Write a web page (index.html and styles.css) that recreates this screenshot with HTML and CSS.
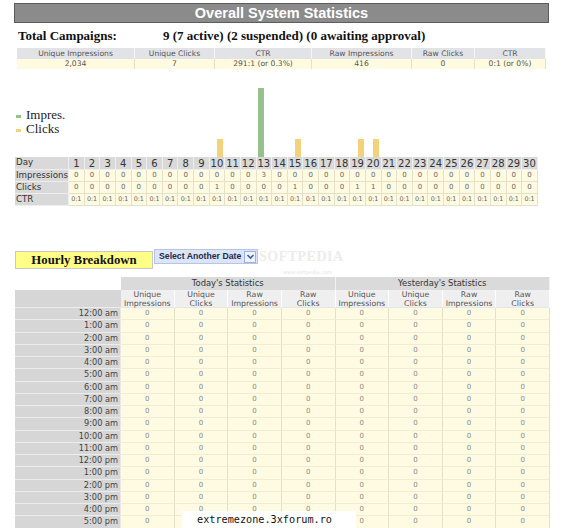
FILE: index.html
```html
<!DOCTYPE html>
<html>
<head>
<meta charset="utf-8">
<title>Overall System Statistics</title>
<link rel="stylesheet" href="styles.css">
</head>
<body>
<div class="page">
  <div class="title">Overall System Statistics</div>
  <div class="total"><span class="total-label">Total Campaigns:</span><span>9 (7 active) (2 suspended) (0 awaiting approval)</span></div>
  <div class="stats">
    <div class="sh">Unique Impressions</div><div class="sh">Unique Clicks</div><div class="sh">CTR</div><div class="sh">Raw Impressions</div><div class="sh">Raw Clicks</div><div class="sh">CTR</div>
    <div class="sd">2,034</div><div class="sd">7</div><div class="sd">291:1 (or 0.3%)</div><div class="sd">416</div><div class="sd">0</div><div class="sd">0:1 (or 0%)</div>
  </div>

  <div class="chart">
    <div class="legend"><div><span class="sw swi"></span>Impres.</div><div><span class="sw swc"></span>Clicks</div></div>
    <div class="day"></div><div class="day"></div><div class="day"></div><div class="day"></div><div class="day"></div>
    <div class="day"></div><div class="day"></div><div class="day"></div><div class="day"></div>
    <div class="day"><span class="bc" style="height:18px"></span></div>
    <div class="day"></div><div class="day"></div>
    <div class="day"><span class="bi" style="height:69px"></span></div>
    <div class="day"></div>
    <div class="day"><span class="bc" style="height:18px"></span></div>
    <div class="day"></div><div class="day"></div><div class="day"></div>
    <div class="day"><span class="bc" style="height:18px"></span></div>
    <div class="day"><span class="bc" style="height:18px"></span></div>
    <div class="day"></div><div class="day"></div><div class="day"></div><div class="day"></div><div class="day"></div>
    <div class="day"></div><div class="day"></div><div class="day"></div><div class="day"></div><div class="day"></div>
  </div>

  <div class="daily">
    <div class="lbl">Day</div>
    <div class="dh">1</div><div class="dh">2</div><div class="dh">3</div><div class="dh">4</div><div class="dh">5</div><div class="dh">6</div><div class="dh">7</div><div class="dh">8</div><div class="dh">9</div><div class="dh">10</div>
    <div class="dh">11</div><div class="dh">12</div><div class="dh">13</div><div class="dh">14</div><div class="dh">15</div><div class="dh">16</div><div class="dh">17</div><div class="dh">18</div><div class="dh">19</div><div class="dh">20</div>
    <div class="dh">21</div><div class="dh">22</div><div class="dh">23</div><div class="dh">24</div><div class="dh">25</div><div class="dh">26</div><div class="dh">27</div><div class="dh">28</div><div class="dh">29</div><div class="dh">30</div>

    <div class="lbl">Impressions</div>
    <div class="dd">0</div><div class="dd">0</div><div class="dd">0</div><div class="dd">0</div><div class="dd">0</div><div class="dd">0</div><div class="dd">0</div><div class="dd">0</div><div class="dd">0</div><div class="dd">0</div>
    <div class="dd">0</div><div class="dd">0</div><div class="dd">3</div><div class="dd">0</div><div class="dd">0</div><div class="dd">0</div><div class="dd">0</div><div class="dd">0</div><div class="dd">0</div><div class="dd">0</div>
    <div class="dd">0</div><div class="dd">0</div><div class="dd">0</div><div class="dd">0</div><div class="dd">0</div><div class="dd">0</div><div class="dd">0</div><div class="dd">0</div><div class="dd">0</div><div class="dd">0</div>

    <div class="lbl">Clicks</div>
    <div class="dd">0</div><div class="dd">0</div><div class="dd">0</div><div class="dd">0</div><div class="dd">0</div><div class="dd">0</div><div class="dd">0</div><div class="dd">0</div><div class="dd">0</div><div class="dd">1</div>
    <div class="dd">0</div><div class="dd">0</div><div class="dd">0</div><div class="dd">0</div><div class="dd">1</div><div class="dd">0</div><div class="dd">0</div><div class="dd">0</div><div class="dd">1</div><div class="dd">1</div>
    <div class="dd">0</div><div class="dd">0</div><div class="dd">0</div><div class="dd">0</div><div class="dd">0</div><div class="dd">0</div><div class="dd">0</div><div class="dd">0</div><div class="dd">0</div><div class="dd">0</div>

    <div class="lbl">CTR</div>
    <div class="dd ctr">0:1</div><div class="dd ctr">0:1</div><div class="dd ctr">0:1</div><div class="dd ctr">0:1</div><div class="dd ctr">0:1</div><div class="dd ctr">0:1</div><div class="dd ctr">0:1</div><div class="dd ctr">0:1</div><div class="dd ctr">0:1</div><div class="dd ctr">0:1</div>
    <div class="dd ctr">0:1</div><div class="dd ctr">0:1</div><div class="dd ctr">0:1</div><div class="dd ctr">0:1</div><div class="dd ctr">0:1</div><div class="dd ctr">0:1</div><div class="dd ctr">0:1</div><div class="dd ctr">0:1</div><div class="dd ctr">0:1</div><div class="dd ctr">0:1</div>
    <div class="dd ctr">0:1</div><div class="dd ctr">0:1</div><div class="dd ctr">0:1</div><div class="dd ctr">0:1</div><div class="dd ctr">0:1</div><div class="dd ctr">0:1</div><div class="dd ctr">0:1</div><div class="dd ctr">0:1</div><div class="dd ctr">0:1</div><div class="dd ctr">0:1</div>
  </div>

  <div class="controls">
    <div class="hb">Hourly Breakdown</div>
    <div class="sel"><span class="sel-text">Select Another Date</span><span class="sel-btn"><svg width="9" height="9" viewBox="0 0 9 9"><path d="M1.5 3 L4.5 6 L7.5 3" fill="none" stroke="#3a5fa8" stroke-width="1.6"/></svg></span></div>
  </div>

  <div class="hourly">
    <div class="blank"></div><div class="hg span4">Today's Statistics</div><div class="hg span4">Yesterday's Statistics</div>
    <div class="hl-head"></div>
    <div class="hs">Unique<br>Impressions</div><div class="hs">Unique<br>Clicks</div><div class="hs">Raw<br>Impressions</div><div class="hs">Raw<br>Clicks</div>
    <div class="hs">Unique<br>Impressions</div><div class="hs">Unique<br>Clicks</div><div class="hs">Raw<br>Impressions</div><div class="hs">Raw<br>Clicks</div>

    <div class="hl">12:00 am</div><div class="hd">0</div><div class="hd">0</div><div class="hd">0</div><div class="hd">0</div><div class="hd">0</div><div class="hd">0</div><div class="hd">0</div><div class="hd">0</div>
    <div class="hl">1:00 am</div><div class="hd">0</div><div class="hd">0</div><div class="hd">0</div><div class="hd">0</div><div class="hd">0</div><div class="hd">0</div><div class="hd">0</div><div class="hd">0</div>
    <div class="hl">2:00 am</div><div class="hd">0</div><div class="hd">0</div><div class="hd">0</div><div class="hd">0</div><div class="hd">0</div><div class="hd">0</div><div class="hd">0</div><div class="hd">0</div>
    <div class="hl">3:00 am</div><div class="hd">0</div><div class="hd">0</div><div class="hd">0</div><div class="hd">0</div><div class="hd">0</div><div class="hd">0</div><div class="hd">0</div><div class="hd">0</div>
    <div class="hl">4:00 am</div><div class="hd">0</div><div class="hd">0</div><div class="hd">0</div><div class="hd">0</div><div class="hd">0</div><div class="hd">0</div><div class="hd">0</div><div class="hd">0</div>
    <div class="hl">5:00 am</div><div class="hd">0</div><div class="hd">0</div><div class="hd">0</div><div class="hd">0</div><div class="hd">0</div><div class="hd">0</div><div class="hd">0</div><div class="hd">0</div>
    <div class="hl">6:00 am</div><div class="hd">0</div><div class="hd">0</div><div class="hd">0</div><div class="hd">0</div><div class="hd">0</div><div class="hd">0</div><div class="hd">0</div><div class="hd">0</div>
    <div class="hl">7:00 am</div><div class="hd">0</div><div class="hd">0</div><div class="hd">0</div><div class="hd">0</div><div class="hd">0</div><div class="hd">0</div><div class="hd">0</div><div class="hd">0</div>
    <div class="hl">8:00 am</div><div class="hd">0</div><div class="hd">0</div><div class="hd">0</div><div class="hd">0</div><div class="hd">0</div><div class="hd">0</div><div class="hd">0</div><div class="hd">0</div>
    <div class="hl">9:00 am</div><div class="hd">0</div><div class="hd">0</div><div class="hd">0</div><div class="hd">0</div><div class="hd">0</div><div class="hd">0</div><div class="hd">0</div><div class="hd">0</div>
    <div class="hl">10:00 am</div><div class="hd">0</div><div class="hd">0</div><div class="hd">0</div><div class="hd">0</div><div class="hd">0</div><div class="hd">0</div><div class="hd">0</div><div class="hd">0</div>
    <div class="hl">11:00 am</div><div class="hd">0</div><div class="hd">0</div><div class="hd">0</div><div class="hd">0</div><div class="hd">0</div><div class="hd">0</div><div class="hd">0</div><div class="hd">0</div>
    <div class="hl">12:00 pm</div><div class="hd">0</div><div class="hd">0</div><div class="hd">0</div><div class="hd">0</div><div class="hd">0</div><div class="hd">0</div><div class="hd">0</div><div class="hd">0</div>
    <div class="hl">1:00 pm</div><div class="hd">0</div><div class="hd">0</div><div class="hd">0</div><div class="hd">0</div><div class="hd">0</div><div class="hd">0</div><div class="hd">0</div><div class="hd">0</div>
    <div class="hl">2:00 pm</div><div class="hd">0</div><div class="hd">0</div><div class="hd">0</div><div class="hd">0</div><div class="hd">0</div><div class="hd">0</div><div class="hd">0</div><div class="hd">0</div>
    <div class="hl">3:00 pm</div><div class="hd">0</div><div class="hd">0</div><div class="hd">0</div><div class="hd">0</div><div class="hd">0</div><div class="hd">0</div><div class="hd">0</div><div class="hd">0</div>
    <div class="hl">4:00 pm</div><div class="hd">0</div><div class="hd">0</div><div class="hd">0</div><div class="hd">0</div><div class="hd">0</div><div class="hd">0</div><div class="hd">0</div><div class="hd">0</div>
    <div class="hl">5:00 pm</div><div class="hd">0</div><div class="hd">0</div><div class="hd">0</div><div class="hd">0</div><div class="hd">0</div><div class="hd">0</div><div class="hd">0</div><div class="hd">0</div>
    <div class="hl">6:00 pm</div><div class="hd">0</div><div class="hd">0</div><div class="hd">0</div><div class="hd">0</div><div class="hd">0</div><div class="hd">0</div><div class="hd">0</div><div class="hd">0</div>
    <div class="hl">7:00 pm</div><div class="hd">0</div><div class="hd">0</div><div class="hd">0</div><div class="hd">0</div><div class="hd">0</div><div class="hd">0</div><div class="hd">0</div><div class="hd">0</div>
  </div>

  <div class="wm">SOFTPEDIA<span class="wm-url">www.softpedia.com</span></div>
  <div class="tag">extremezone.3xforum.ro</div>
</div>
</body>
</html>
```

FILE: styles.css
```css
* { box-sizing: border-box; }
html, body { margin: 0; padding: 0; background: #fff; }
body { font-family: "DejaVu Sans", Verdana, sans-serif; color: #333; }

.page { position: relative; padding: 3px 0 0 15px; }

.title {
  margin-left: -1px;
  width: 535px;
  height: 20px;
  background: #8b8b8b;
  border: 1px solid #5c5c5c;
  color: #fff;
  font: bold 14.5px/18px "Liberation Sans", Arial, sans-serif;
  text-align: center;
}

.total {
  display: flex;
  height: 25px;
  padding: 5px 0 0 3px;
  font: bold 13px/16px "Liberation Serif", "Times New Roman", serif;
  color: #111;
}
.total-label { width: 145px; }

.stats {
  margin-left: 2px;
  display: grid;
  grid-template-columns: 118px 80px 97px 100px 63px 71px;
  grid-template-rows: 11px 10px;
  font-size: 7.6px;
  color: #555;
  text-align: center;
}
.sh { background: #e2e3e7; border-right: 1px solid #f6f6f6; line-height: 11px; }
.sd { background: #fffbe1; border-right: 1px solid #e7e1c4; line-height: 10px; }

.chart {
  display: grid;
  grid-template-columns: 54px repeat(30, 15.633px);
  height: 88px;
}
.legend {
  align-self: end;
  padding: 0 0 21px 1px;
  font: 13px/14px "Liberation Serif", "Times New Roman", serif;
  color: #222;
  white-space: nowrap;
}
.sw { display: inline-block; width: 5px; height: 3px; margin-right: 5px; vertical-align: 1px; }
.swi { background: #96c08c; }
.swc { background: #f2d27a; }
.day { display: flex; align-items: flex-end; }
.bi { width: 6px; margin-left: 1.5px; background: #96c08c; }
.bc { width: 6px; margin-left: 7.5px; background: #f2d27a; }

.daily {
  display: grid;
  grid-template-columns: 54px repeat(30, 15.633px);
  grid-template-rows: 13px 12px 12px 12px;
}
.daily > div { border-right: 1px solid; border-bottom: 1px solid; text-align: center; white-space: nowrap; overflow: hidden; }
.daily > .lbl {
  background: #d9d9d9;
  border-color: #eeeeee;
  text-align: left;
  padding-left: 1px;
  font-size: 8.7px;
  line-height: 11px;
  color: #333;
}
.dh { background: #d9d9d9; border-color: #eeeeee !important; font-size: 10px; line-height: 13px; color: #333; }
.dd { background: #fffbe2; border-color: #e6e1c6 !important; font-size: 7px; line-height: 11px; color: #666; }
.daily > .ctr { font-size: 6.4px; letter-spacing: -0.1px; }

.controls {
  display: flex;
  align-items: flex-start;
  height: 20px;
  margin-top: 43px;
}
.hb {
  margin-top: 2px;
  width: 138px;
  height: 18px;
  background: #ffff88;
  border: 1px solid #c9c9c9;
  font: bold 12.8px/16px "Liberation Serif", "Times New Roman", serif;
  text-align: center;
  color: #111;
}
.sel {
  margin-left: 1px;
  width: 104px;
  height: 15px;
  display: flex;
  align-items: center;
  justify-content: space-between;
  background: #dbe5f7;
  border: 1px solid #b5c5e2;
  padding-left: 4px;
}
.sel-text { font: bold 8.7px/13px "Liberation Sans", Arial, sans-serif; color: #1e2a4a; white-space: nowrap; }
.sel-btn {
  width: 12px;
  height: 12px;
  margin-right: 1px;
  display: flex;
  align-items: center;
  justify-content: center;
  background: #eef2fb;
  border: 1px solid #9fb3d8;
}

.hourly {
  margin-top: 8px;
  display: grid;
  grid-template-columns: 106px repeat(8, 53.625px);
  grid-template-rows: 13px 18px;
  grid-auto-rows: 12.25px;
  width: 535px;
}
.span4 { grid-column: span 4; }
.hg {
  background: #dadada;
  border-right: 1px solid #f2f2f2;
  font-size: 8.4px;
  line-height: 13px;
  text-align: center;
  color: #333;
}
.hl-head { background: #d6d6d6; border-bottom: 1px solid #ececec; }
.hs {
  background: #efefef;
  border-right: 1px solid #ffffff;
  border-bottom: 1px solid #e6e6e6;
  font-size: 7.8px;
  line-height: 8.5px;
  padding-top: 1px;
  text-align: center;
  color: #555;
}
.hl {
  background: #d6d6d6;
  border-bottom: 1px solid #ececec;
  border-right: 1px solid #e8e8e8;
  text-align: right;
  padding-right: 2px;
  font-size: 8.2px;
  line-height: 11.5px;
  color: #444;
}
.hd {
  background: #fffbe2;
  border-right: 1px solid #e6e1c6;
  border-bottom: 1px solid #f1ecd2;
  text-align: center;
  font-size: 7px;
  line-height: 11px;
  color: #8a8a8a;
}

.wm {
  position: absolute;
  left: 259px;
  top: 250px;
  font: bold 14px/14px "Liberation Serif", serif;
  color: #ececec;
  letter-spacing: 0.5px;
}
.wm-url {
  display: block;
  margin: 5px 0 0 24px;
  font: 5px/6px "DejaVu Sans", sans-serif;
  color: #e4e4e4;
  letter-spacing: 0;
}

.tag {
  position: absolute;
  left: 182px;
  top: 511px;
  width: 174px;
  height: 17px;
  padding-left: 15px;
  background: #fff;
  font: 10.2px/17px "DejaVu Sans Mono", "Liberation Mono", monospace;
  color: #111;
  white-space: nowrap;
}
```
